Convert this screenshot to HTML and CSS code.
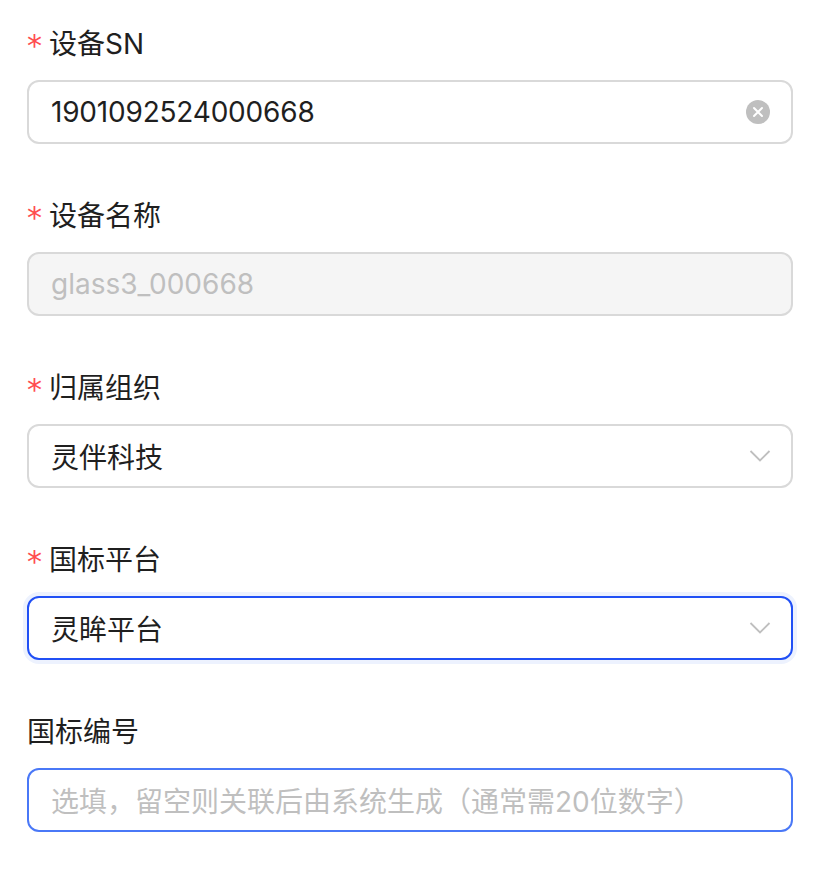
FILE: index.html
```html
<!DOCTYPE html>
<html lang="zh-CN">
<head>
<meta charset="utf-8">
<title>设备表单</title>
<link rel="stylesheet" href="styles.css">
</head>
<body>
<form class="form">
  <div class="item">
    <label class="label"><span class="req">*</span>设备SN</label>
    <div class="control">
      <span class="value num">1901092524000668</span>
      <span class="clear">
        <svg width="24" height="24" viewBox="0 0 24 24"><circle cx="12" cy="12" r="12" fill="#bfbfbf"/><path d="M8 8 L16 16 M16 8 L8 16" stroke="#fff" stroke-width="2" stroke-linecap="round"/></svg>
      </span>
    </div>
  </div>
  <div class="item">
    <label class="label"><span class="req">*</span>设备名称</label>
    <div class="control disabled">
      <span class="value">glass3_000668</span>
    </div>
  </div>
  <div class="item">
    <label class="label"><span class="req">*</span>归属组织</label>
    <div class="control">
      <span class="value">灵伴科技</span>
      <span class="arrow"><svg width="22" height="14" viewBox="0 0 22 14"><path d="M1.5 2 L11 11.5 L20.5 2" fill="none" stroke="#bfbfbf" stroke-width="1.8"/></svg></span>
    </div>
  </div>
  <div class="item">
    <label class="label"><span class="req">*</span>国标平台</label>
    <div class="control focused">
      <span class="value">灵眸平台</span>
      <span class="arrow"><svg width="22" height="14" viewBox="0 0 22 14"><path d="M1.5 2 L11 11.5 L20.5 2" fill="none" stroke="#bfbfbf" stroke-width="1.8"/></svg></span>
    </div>
  </div>
  <div class="item">
    <label class="label">国标编号</label>
    <div class="control hover">
      <span class="value placeholder">选填，留空则关联后由系统生成（通常需20位数字）</span>
    </div>
  </div>
</form>
</body>
</html>
```
FILE: styles.css
```css
html, body {
  margin: 0;
  padding: 0;
  background: #ffffff;
}
body {
  font-family: "Inter", "Noto Sans CJK SC", sans-serif;
  font-size: 28px;
  color: #1f1f1f;
}
.form {
  padding: 20px 41px 0 27px;
}
.item {
  margin-bottom: 48px;
}
.label {
  display: flex;
  align-items: center;
  height: 44px;
  padding-bottom: 16px;
  font-size: 28px;
  color: #1f1f1f;
}
.req {
  color: #ff4d4f;
  font-family: "DejaVu Sans", sans-serif;
  font-size: 30px;
  margin-right: 8px;
  width: 14px;
  line-height: 1;
  padding-top: 8px;
}
.control {
  box-sizing: border-box;
  height: 64px;
  border: 2px solid #d9d9d9;
  border-radius: 12px;
  background: #fff;
  display: flex;
  align-items: center;
  padding: 0 22px;
}
.value {
  flex: 1;
  white-space: nowrap;
  font-size: 28px;
}
.num {
  letter-spacing: -0.2px;
}
.disabled {
  background: #f5f5f5;
}
.disabled .value {
  color: #bfbfbf;
}
.placeholder {
  color: #bfbfbf;
}
.clear {
  display: flex;
  margin-right: -1px;
}
.arrow {
  display: flex;
  margin-right: -2px;
}
.focused {
  border-color: #2150f5;
  box-shadow: 0 0 0 4px #edf2fe;
}
.hover {
  border-color: #4a78f7;
}
```
